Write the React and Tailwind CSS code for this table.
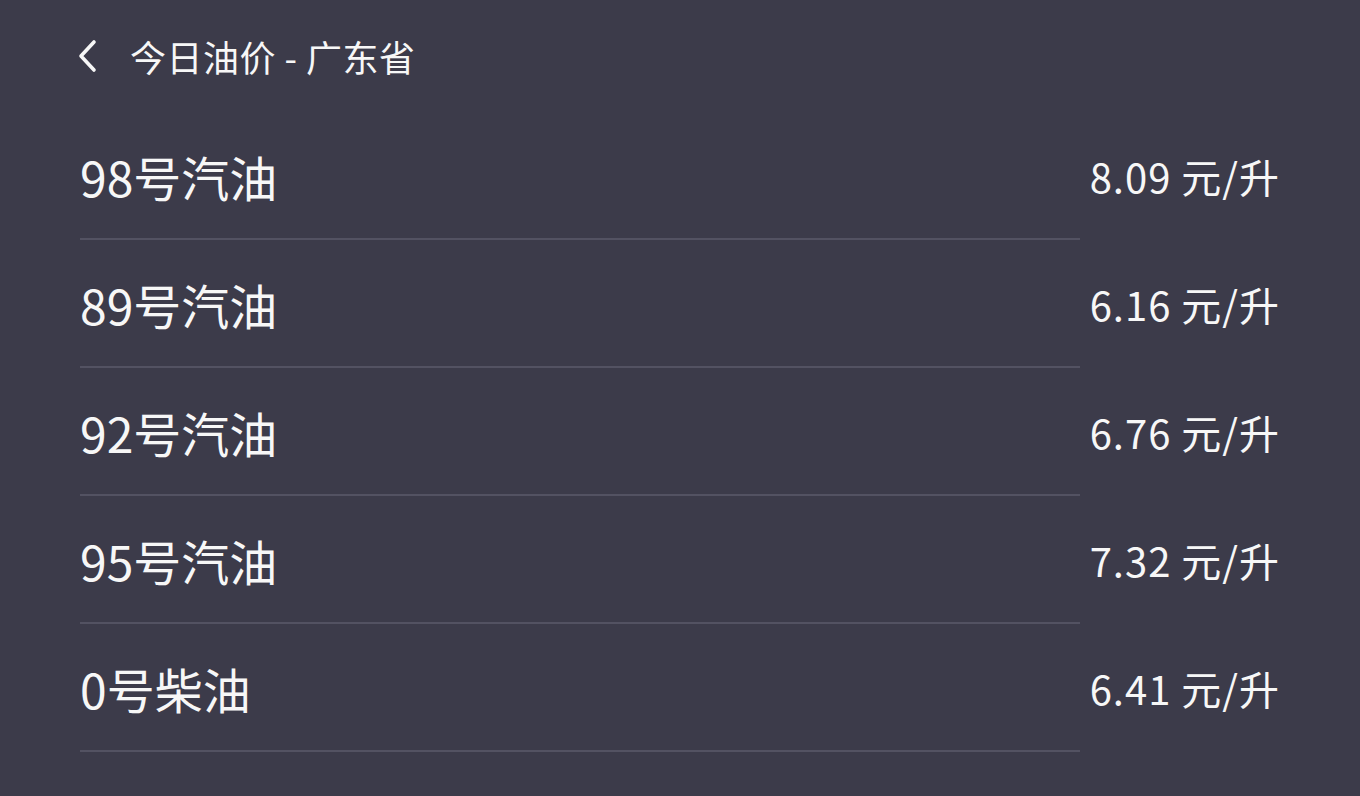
import React from "react";

const rows = [
  ["98号汽油", "8.09 元/升"],
  ["89号汽油", "6.16 元/升"],
  ["92号汽油", "6.76 元/升"],
  ["95号汽油", "7.32 元/升"],
  ["0号柴油", "6.41 元/升"],
];

export default function App() {
  return (
    <div
      className="min-h-screen w-full bg-[#3c3b4a] text-[#f7f7f7]"
      style={{ fontFamily: '"Noto Sans CJK SC", "Noto Sans", sans-serif' }}
    >
      <div className="flex h-[112px] items-center pl-[76px]">
        <svg width="24" height="34" viewBox="0 0 24 34" fill="none" className="shrink-0">
          <path d="M18 3 L5 17 L18 31" stroke="#f7f7f7" strokeWidth="3.6" strokeLinecap="round" strokeLinejoin="round" />
        </svg>
        <span className="ml-[30px] text-[36px] leading-[54px] tracking-[0.5px]">今日油价 - 广东省</span>
      </div>
      <div className="px-[80px]">
        {rows.map(([name, price]) => (
          <div key={name}>
            <div className="flex items-center justify-between pt-[28px] pb-[26px]">
              <span className="text-[48px] leading-[72px]">{name}</span>
              <span className="text-[40px] leading-[72px] tracking-[1px]">{price}</span>
            </div>
            <div className="h-[2px] w-[1000px] bg-[#535262]" />
          </div>
        ))}
      </div>
    </div>
  );
}
